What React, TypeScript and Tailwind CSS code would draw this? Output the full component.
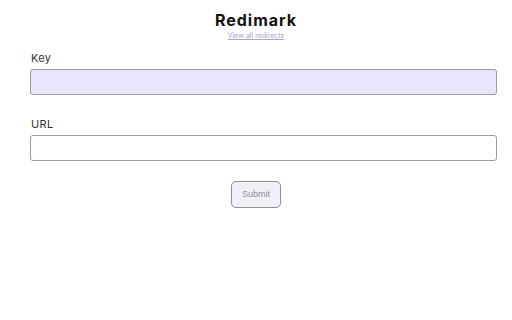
export default function App() {
  return (
    <div className="min-h-screen bg-white px-[30px] pt-[10px] font-['Inter',sans-serif] text-[#222]">
      <div className="flex flex-col items-center">
        <h1 className="text-[16px] font-bold leading-[20px] tracking-[0.06em] text-[#111]">Redimark</h1>
        <a href="#" className="mt-[2px] text-[7px] leading-[8px] text-[#a6a3d6] underline">
          View all redirects
        </a>
      </div>
      <form className="mt-[11px] flex flex-col" onSubmit={(e) => e.preventDefault()}>
        <label className="mb-[4px] pl-px text-[11px] leading-[14px] tracking-[0.03em] text-[#333]">Key</label>
        <input
          className="h-[26px] w-[467px] rounded-[3px] border border-[#9b9b9b] bg-[#e8e6fc] outline-none"
          type="text"
        />
        <label className="mb-[4px] mt-[22px] pl-px text-[11px] leading-[14px] tracking-[0.03em] text-[#333]">URL</label>
        <input
          className="h-[26px] w-[467px] rounded-[3px] border border-[#9b9b9b] bg-white outline-none"
          type="text"
        />
        <div className="mt-[20px] flex justify-center">
          <button
            type="submit"
            className="h-[27px] w-[50px] rounded-[5px] border border-[#8f8f95] bg-[#f1f0f7] font-['Liberation_Sans',sans-serif] text-[9px] text-[#8d8b9e]"
          >
            Submit
          </button>
        </div>
      </form>
    </div>
  );
}
